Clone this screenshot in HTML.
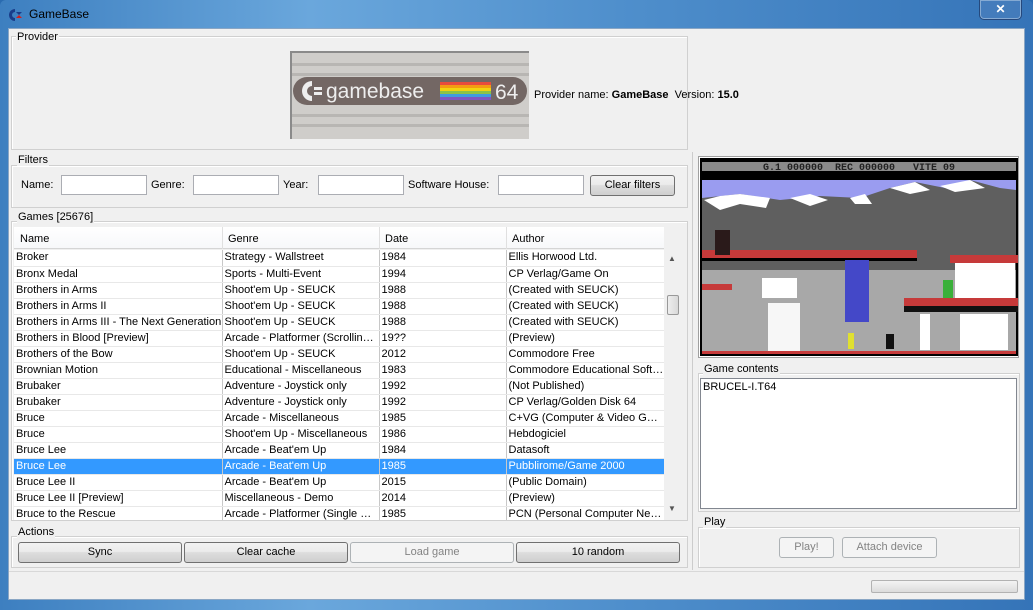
<!DOCTYPE html>
<html><head><meta charset="utf-8">
<style>
*{box-sizing:border-box;margin:0;padding:0}
body{width:1033px;height:610px;overflow:hidden;position:relative;font-family:"Liberation Sans",sans-serif;font-size:11px;color:#000;background:#2a6bb0}
.abs{position:absolute}
.win{left:0;top:0;width:1033px;height:610px;background:linear-gradient(90deg,#3d7fc0 0%,#6aa7dc 30%,#4f8fcc 60%,#3574b8 100%);border-radius:6px 6px 0 0}
.client{left:8px;top:28px;width:1017px;height:572px;background:#f0f0f0;border:1px solid #8aa6c4}
.fs{position:absolute;border:1px solid #d0d0d0;box-shadow:inset 1px 1px 0 #fff}
.lbl{position:absolute;background:#f0f0f0;padding:0 1px;line-height:12px}
.inp{position:absolute;background:#fff;border:1px solid #abadb3;height:20px}
.btn{position:absolute;border:1px solid #707070;border-radius:3px;background:linear-gradient(#f2f2f2 0%,#ebebeb 45%,#dddddd 50%,#cfcfcf 100%);text-align:center;line-height:18px}
.btn.dis{border-color:#adb2b5;background:#f4f4f4;color:#838383}
table{border-collapse:collapse;table-layout:fixed}
td{height:16px;border-right:1px solid #c8c8c8;border-bottom:1px solid #e8e8e8;padding:0 0 0 2px;white-space:nowrap;overflow:hidden;text-overflow:ellipsis;line-height:15px;font-size:11px}
tr.sel td{background:#3399ff;color:#fff}
</style></head><body>
<div class="abs win"></div>
<svg class="abs" style="left:8px;top:8px" width="16" height="14" viewBox="0 0 16 14"><path d="M7 1 A6 6 0 1 0 7 13 L7 10 A3 3 0 1 1 7 4 Z" fill="#1a3d8a"/><path d="M8 4 L14 4 L11 7 Z" fill="#1a3d8a"/><path d="M8 10 L14 10 L11 7 Z" fill="#d02020"/></svg>
<div class="abs" style="left:29px;top:7px;font-size:12px;color:#000">GameBase</div>
<div class="abs" style="left:979px;top:0;width:43px;height:20px;border:1px solid rgba(30,60,110,.8);border-top:none;border-radius:0 0 5px 5px;box-shadow:inset 0 0 0 1px rgba(255,255,255,.35);background:rgba(80,130,190,.5);color:#fff;font-weight:bold;font-size:12px;text-align:center;line-height:18px">✕</div>
<div class="abs client"></div>

<div class="fs" style="left:11px;top:36px;width:677px;height:114px"></div>
<div class="lbl" style="left:16px;top:31px">Provider</div>
<svg class="abs" style="left:290px;top:51px" width="239" height="88" viewBox="0 0 239 88">
<rect width="239" height="88" fill="#cfcdca"/>
<g fill="#b8b6b3"><rect y="12" width="239" height="3"/><rect y="22" width="239" height="3"/><rect y="63" width="239" height="3"/><rect y="73" width="239" height="3"/></g>
<rect x="0" y="0" width="239" height="2" fill="#8a8a8a"/><rect x="0" y="0" width="2" height="88" fill="#8a8a8a"/>
<rect x="3" y="26" width="234" height="28" rx="14" fill="#736764"/>
<path d="M22 30 A10 10 0 1 0 22 50 L22 45 A5 5 0 1 1 22 35 Z" fill="#eee"/>
<rect x="24" y="36" width="8" height="3" fill="#eee"/><rect x="24" y="41" width="8" height="3" fill="#eee"/>
<text x="36" y="47" font-family="Liberation Sans" font-size="21" fill="#eee">gamebase</text>
<g><rect x="150" y="31" width="51" height="3" fill="#e74c3c"/><rect x="150" y="34" width="51" height="3" fill="#f39c12"/><rect x="150" y="37" width="51" height="3" fill="#f1d40f"/><rect x="150" y="40" width="51" height="3" fill="#8bc34a"/><rect x="150" y="43" width="51" height="3" fill="#3f9de0"/><rect x="150" y="46" width="51" height="3" fill="#7e57c2"/></g>
<text x="205" y="48" font-family="Liberation Sans" font-size="21" fill="#eee">64</text>
</svg>
<div class="abs" style="left:534px;top:89px">Provider name: <b>GameBase</b>&nbsp; Version: <b>15.0</b></div>

<div class="fs" style="left:11px;top:165px;width:677px;height:43px"></div>
<div class="lbl" style="left:17px;top:154px">Filters</div>
<div class="abs" style="left:21px;top:179px">Name:</div>
<div class="inp" style="left:61px;top:175px;width:86px"></div>
<div class="abs" style="left:151px;top:179px">Genre:</div>
<div class="inp" style="left:193px;top:175px;width:86px"></div>
<div class="abs" style="left:283px;top:179px">Year:</div>
<div class="inp" style="left:318px;top:175px;width:86px"></div>
<div class="abs" style="left:408px;top:179px">Software House:</div>
<div class="inp" style="left:498px;top:175px;width:86px"></div>
<div class="btn" style="left:590px;top:175px;width:85px;height:21px;line-height:19px">Clear filters</div>

<div class="fs" style="left:11px;top:221px;width:677px;height:300px"></div>
<div class="lbl" style="left:17px;top:211px">Games [25676]</div>
<div class="abs" style="left:14px;top:227px;width:650px;height:22px;background:linear-gradient(#fff,#f7f8fa);border-bottom:1px solid #d5d5d5"></div>
<div class="abs" style="left:20px;top:233px">Name</div>
<div class="abs" style="left:222px;top:227px;width:1px;height:22px;background:#e0e0e0"></div>
<div class="abs" style="left:228px;top:233px">Genre</div>
<div class="abs" style="left:379px;top:227px;width:1px;height:22px;background:#e0e0e0"></div>
<div class="abs" style="left:385px;top:233px">Date</div>
<div class="abs" style="left:506px;top:227px;width:1px;height:22px;background:#e0e0e0"></div>
<div class="abs" style="left:512px;top:233px">Author</div>
<div class="abs" style="left:14px;top:250px;width:650px;height:270px;overflow:hidden;background:#fff">
<table style="width:650px">
<colgroup><col style="width:208px"><col style="width:157px"><col style="width:127px"><col style="width:158px"></colgroup>
<tr><td>Broker</td><td>Strategy - Wallstreet</td><td>1984</td><td>Ellis Horwood Ltd.</td></tr>
<tr><td>Bronx Medal</td><td>Sports - Multi-Event</td><td>1994</td><td>CP Verlag/Game On</td></tr>
<tr><td>Brothers in Arms</td><td>Shoot'em Up - SEUCK</td><td>1988</td><td>(Created with SEUCK)</td></tr>
<tr><td>Brothers in Arms II</td><td>Shoot'em Up - SEUCK</td><td>1988</td><td>(Created with SEUCK)</td></tr>
<tr><td style="text-overflow:clip">Brothers in Arms III - The Next Generation</td><td>Shoot'em Up - SEUCK</td><td>1988</td><td>(Created with SEUCK)</td></tr>
<tr><td>Brothers in Blood [Preview]</td><td>Arcade - Platformer (Scrolling Screen)</td><td>19??</td><td>(Preview)</td></tr>
<tr><td>Brothers of the Bow</td><td>Shoot'em Up - SEUCK</td><td>2012</td><td>Commodore Free</td></tr>
<tr><td>Brownian Motion</td><td>Educational - Miscellaneous</td><td>1983</td><td>Commodore Educational Software</td></tr>
<tr><td>Brubaker</td><td>Adventure - Joystick only</td><td>1992</td><td>(Not Published)</td></tr>
<tr><td>Brubaker</td><td>Adventure - Joystick only</td><td>1992</td><td>CP Verlag/Golden Disk 64</td></tr>
<tr><td>Bruce</td><td>Arcade - Miscellaneous</td><td>1985</td><td>C+VG (Computer &amp; Video Games)</td></tr>
<tr><td>Bruce</td><td>Shoot'em Up - Miscellaneous</td><td>1986</td><td>Hebdogiciel</td></tr>
<tr><td>Bruce Lee</td><td>Arcade - Beat'em Up</td><td>1984</td><td>Datasoft</td></tr>
<tr class="sel"><td>Bruce Lee</td><td>Arcade - Beat'em Up</td><td>1985</td><td>Pubblirome/Game 2000</td></tr>
<tr><td>Bruce Lee II</td><td>Arcade - Beat'em Up</td><td>2015</td><td>(Public Domain)</td></tr>
<tr><td>Bruce Lee II [Preview]</td><td>Miscellaneous - Demo</td><td>2014</td><td>(Preview)</td></tr>
<tr><td>Bruce to the Rescue</td><td>Arcade - Platformer (Single Screen)</td><td>1985</td><td>PCN (Personal Computer News)</td></tr>
</table></div>
<div class="abs" style="left:664px;top:250px;width:17px;height:270px;background:#f0f0f0"></div>
<div class="abs" style="left:668px;top:254px;font-size:8px;color:#555">▲</div>
<div class="abs" style="left:668px;top:504px;font-size:8px;color:#555">▼</div>
<div class="abs" style="left:667px;top:295px;width:12px;height:20px;border:1px solid #999;border-radius:2px;background:linear-gradient(90deg,#eee,#d8d8d8)"></div>

<div class="fs" style="left:11px;top:536px;width:677px;height:32px"></div>
<div class="lbl" style="left:17px;top:526px">Actions</div>
<div class="btn" style="left:18px;top:542px;width:164px;height:21px">Sync</div>
<div class="btn" style="left:184px;top:542px;width:164px;height:21px">Clear cache</div>
<div class="btn dis" style="left:350px;top:542px;width:164px;height:21px">Load game</div>
<div class="btn" style="left:516px;top:542px;width:164px;height:21px">10 random</div>

<div class="abs" style="left:692px;top:152px;width:1px;height:418px;background:#ccc"></div>

<div class="abs" style="left:698px;top:156px;width:321px;height:202px;border:1px solid #a0a0a0;background:#fff"></div>
<svg class="abs" style="left:700px;top:158px" width="318" height="198" viewBox="0 0 318 198">
<rect width="318" height="198" fill="#000"/>
<rect x="2" y="4" width="314" height="9" fill="#8a8a8a"/>
<text x="159" y="12" text-anchor="middle" font-family="Liberation Mono" font-size="10" font-weight="bold" fill="#222" xml:space="preserve">G.1 000000  REC 000000   VITE 09</text>
<rect x="2" y="22" width="314" height="172" fill="#a8a8a8"/>
<rect x="2" y="22" width="314" height="40" fill="#9a9cf0"/>
<path d="M2 40 L40 36 L80 42 L120 38 L160 40 L190 30 L215 24 L245 30 L270 22 L300 30 L316 32 L316 112 L2 112 Z" fill="#5f5f5f"/>
<path d="M4 42 L20 38 L40 36 L70 40 L66 50 L40 46 L20 52 Z M90 40 L110 36 L128 42 L110 48 Z M150 40 L165 36 L172 46 L155 46 Z M190 30 L215 24 L230 32 L210 36 Z M240 28 L270 22 L285 30 L255 34 Z" fill="#fff"/>
<rect x="2" y="112" width="314" height="84" fill="#a8a8a8"/>
<rect x="2" y="92" width="215" height="10" fill="#c63a3a"/>
<rect x="2" y="100" width="215" height="3" fill="#000"/>
<rect x="145" y="102" width="24" height="62" fill="#4448c8"/>
<rect x="250" y="97" width="68" height="8" fill="#c63a3a"/>
<rect x="255" y="105" width="60" height="40" fill="#fff"/>
<rect x="204" y="140" width="114" height="8" fill="#c63a3a"/>
<rect x="204" y="148" width="114" height="6" fill="#111"/>
<rect x="220" y="156" width="10" height="36" fill="#fff"/>
<rect x="260" y="156" width="48" height="36" fill="#fff"/>
<rect x="2" y="126" width="30" height="6" fill="#c63a3a"/>
<rect x="62" y="120" width="35" height="20" fill="#fff"/>
<rect x="68" y="145" width="32" height="48" fill="#fff" opacity=".9"/>
<rect x="15" y="72" width="15" height="25" fill="#2a1a1a"/>
<rect x="243" y="122" width="10" height="18" fill="#3ab03a"/>
<rect x="148" y="175" width="6" height="16" fill="#e0e030"/>
<rect x="186" y="176" width="8" height="15" fill="#111"/>
<rect x="2" y="193" width="314" height="3" fill="#c63a3a"/>
</svg>

<div class="fs" style="left:698px;top:373px;width:322px;height:139px"></div>
<div class="lbl" style="left:703px;top:363px">Game contents</div>
<div class="abs" style="left:700px;top:378px;width:317px;height:131px;background:#fff;border:1px solid #828790;padding:2px 2px">BRUCEL-I.T64</div>

<div class="fs" style="left:698px;top:527px;width:322px;height:41px"></div>
<div class="lbl" style="left:703px;top:516px">Play</div>
<div class="btn dis" style="left:779px;top:537px;width:55px;height:21px">Play!</div>
<div class="btn dis" style="left:842px;top:537px;width:95px;height:21px">Attach device</div>

<div class="abs" style="left:9px;top:571px;width:1015px;height:1px;background:#d8d8d8"></div>
<div class="abs" style="left:871px;top:580px;width:147px;height:13px;border:1px solid #b2b2b2;border-radius:2px;background:linear-gradient(#f3f3f3,#dcdcdc)"></div>
</body></html>
